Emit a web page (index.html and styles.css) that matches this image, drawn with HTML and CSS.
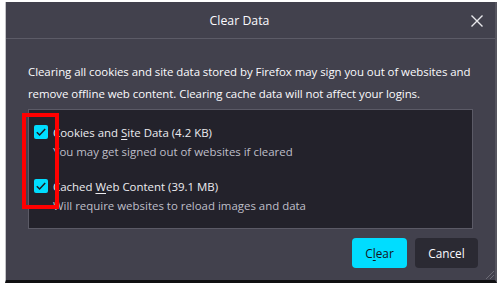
FILE: index.html
```html
<!DOCTYPE html>
<html>
<head>
<meta charset="utf-8">
<link rel="stylesheet" href="styles.css">
</head>
<body>
<div class="dialog">
  <div class="titlebar">
    <span class="title">Clear Data</span>
    <svg class="close" width="14" height="14" viewBox="0 0 14 14"><path d="M1.5 1.5L12.5 12.5M12.5 1.5L1.5 12.5" stroke="#e8e8ec" stroke-width="1.4" fill="none"/></svg>
  </div>
  <div class="content">
    <p class="intro">Clearing all cookies and site data stored by Firefox may sign you out of websites and remove offline web content. Clearing cache data will not affect your logins.</p>
    <div class="box">
      <div class="option">
        <div class="row">
          <span class="check"><svg width="14" height="14" viewBox="0 0 14 14"><path d="M2.8 7.2L5.6 10L11.2 4" stroke="#1c1b22" stroke-width="1.5" fill="none"/></svg></span>
          <span class="label">Cookies and <u>S</u>ite Data (4.2 KB)</span>
        </div>
        <div class="sub">You may get signed out of websites if cleared</div>
      </div>
      <div class="option">
        <div class="row">
          <span class="check"><svg width="14" height="14" viewBox="0 0 14 14"><path d="M2.8 7.2L5.6 10L11.2 4" stroke="#1c1b22" stroke-width="1.5" fill="none"/></svg></span>
          <span class="label">Cached <u>W</u>eb Content (39.1 MB)</span>
        </div>
        <div class="sub">Will require websites to reload images and data</div>
      </div>
    </div>
    <div class="buttons">
      <button class="btn primary">C<u>l</u>ear</button>
      <button class="btn secondary">Cancel</button>
    </div>
  </div>
  <div class="highlight"></div>
  <div class="grip"></div>
</div>
</body>
</html>
```

FILE: styles.css
```css
html, body {
  margin: 0;
  padding: 0;
  background: #ffffff;
}
body {
  font-family: "Open Sans", "Noto Sans", sans-serif;
  font-size: 11.45px;
  width: 500px;
  height: 287px;
  overflow: hidden;
}
.dialog {
  position: relative;
  margin: 2px 3px 0 5px;
  height: 281px;
  box-sizing: border-box;
  background: #42414d;
  border-left: 1px solid #c4c4c8;
  border-right: 2px solid #55545e;
  border-bottom: 3px solid #101012;
  display: flex;
  flex-direction: column;
  color: #fbfbfe;
}
.titlebar {
  height: 36px;
  border-bottom: 1px solid #5c5b67;
  display: flex;
  align-items: center;
  justify-content: center;
  padding-right: 22px;
  position: relative;
}
.title {
  font-size: 12.3px;
  color: #fbfbfe;
}
.close {
  position: absolute;
  right: 11px;
  top: 12px;
}
.content {
  padding: 22px 17px 0 22px;
  display: flex;
  flex-direction: column;
}
.intro {
  margin: 0 -4px 0 0;
  line-height: 22px;
  letter-spacing: -0.05px;
  color: #fbfbfe;
}
.box {
  margin-top: 4px;
  margin-right: 5px;
  background: #23222b;
  border: 1px solid #5b5a66;
  padding: 12px 5px 12px 5px;
  display: flex;
  flex-direction: column;
  gap: 14px;
}
.row {
  display: flex;
  align-items: center;
  height: 20px;
  gap: 5px;
}
.check {
  width: 14px;
  height: 14px;
  background: #00ddff;
  border-radius: 2px;
  display: flex;
}
.label {
  color: #ececf0;
}
.label u, .btn u {
  text-underline-offset: 2px;
}
.sub {
  padding-left: 19px;
  height: 20px;
  line-height: 20px;
  color: #bfbfc9;
}
.buttons {
  display: flex;
  justify-content: flex-end;
  gap: 8px;
  margin-top: 9px;
}
.btn {
  font-family: inherit;
  font-size: 11.8px;
  height: 30px;
  border: none;
  border-radius: 4px;
  padding: 0;
}
.primary {
  width: 55px;
  background: #00ddff;
  color: #15141a;
}
.secondary {
  width: 63px;
  background: #2b2a33;
  color: #fbfbfe;
}
.highlight {
  position: absolute;
  left: 16px;
  top: 111px;
  width: 29px;
  height: 88px;
  border: 4px solid #ff0000;
}
.grip {
  position: absolute;
  right: 1px;
  bottom: 1px;
  width: 10px;
  height: 10px;
  background: repeating-linear-gradient(135deg, transparent 0 2px, #6c6b75 2px 3px);
  clip-path: polygon(100% 0, 100% 100%, 0 100%);
}
```
